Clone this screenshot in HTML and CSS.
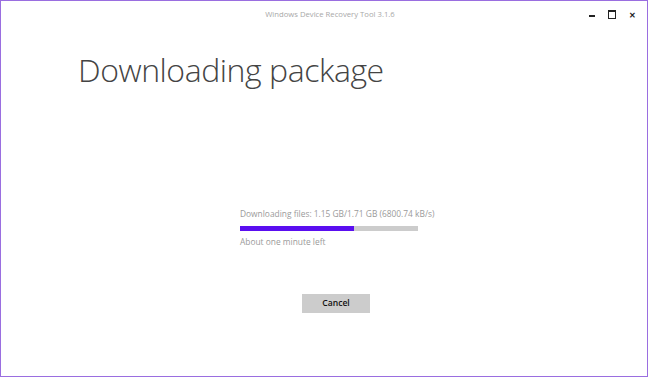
FILE: index.html
```html
<!DOCTYPE html>
<html lang="en">
<head>
    <meta charset="UTF-8">
    <meta name="viewport" content="width=device-width, initial-scale=1.0">
    <title>Windows Device Recovery Tool</title>
    <link rel="stylesheet" href="styles.css">
</head>
<body>
<div class="window">
    <div class="titlebar">
        <span class="title">Windows Device Recovery Tool 3.1.6</span>
        <div class="controls">
            <span class="ctl ctl-min"></span>
            <span class="ctl ctl-max"></span>
            <span class="ctl ctl-close">&#x2715;</span>
        </div>
    </div>

    <h1 class="heading">Downloading package</h1>

    <div class="progress">
        <div class="progress-label">Downloading files: 1.15 GB/1.71 GB (6800.74 kB/s)</div>
        <div class="progress-track">
            <div class="progress-fill" style="width: 64%"></div>
        </div>
        <div class="progress-eta">About one minute left</div>
    </div>

    <div class="actions">
        <button class="btn">Cancel</button>
    </div>
</div><!-- // window -->
</body>
</html>
```

FILE: styles.css
```css
* {
	box-sizing: border-box;
}

body {
	margin: 0;
	background: #fff;
	font-family: "Open Sans", "Noto Sans", sans-serif;
}

.window {
	width: 648px;
	height: 377px;
	border: 1px solid #9a6ee0;
	background: #fff;
	display: flex;
	flex-direction: column;
}

/* title bar */
.titlebar {
	position: relative;
	height: 26px;
	display: flex;
	align-items: center;
	justify-content: center;
	padding-left: 12px;
}

	.title {
		font-size: 7.7px;
		color: #a8a8a8;
	}

	.controls {
		position: absolute;
		right: 0;
		top: 0;
		height: 26px;
		display: flex;
		align-items: center;
	}

	.ctl {
		width: 20px;
		height: 26px;
		display: flex;
		align-items: center;
		justify-content: center;
		color: #222;
	}

	.ctl-min::before {
		content: "";
		width: 6px;
		height: 2px;
		margin-top: 4px;
		background: #222;
	}

	.ctl-max::before {
		content: "";
		width: 6px;
		height: 6px;
		border: 1px solid #222;
		border-top-width: 2px;
	}

	.ctl-close {
		font-size: 8px;
		font-weight: bold;
		margin-right: 5px;
	}

/* content */
.heading {
	margin: 21px 0 0 77px;
	font-weight: 300;
	font-size: 32px;
	line-height: 44px;
	color: #444;
	letter-spacing: -0.45px;
}

.progress {
	margin: 115px 0 0 239px;
	width: 178px;
}

	.progress-label,
	.progress-eta {
		font-size: 8.4px;
		color: #9a9a9a;
		line-height: 14px;
		white-space: nowrap;
	}

	.progress-track {
		height: 5px;
		margin: 5px 0 4px;
		background: #cccccc;
	}

	.progress-fill {
		height: 100%;
		background: #5a0ef0;
	}

.actions {
	margin: 40px 0 0 301px;
}

	.btn {
		width: 68px;
		height: 19px;
		border: 0;
		background: #cccccc;
		font-family: inherit;
		font-size: 8.6px;
		font-weight: 600;
		color: #111;
		padding: 0;
	}
```
